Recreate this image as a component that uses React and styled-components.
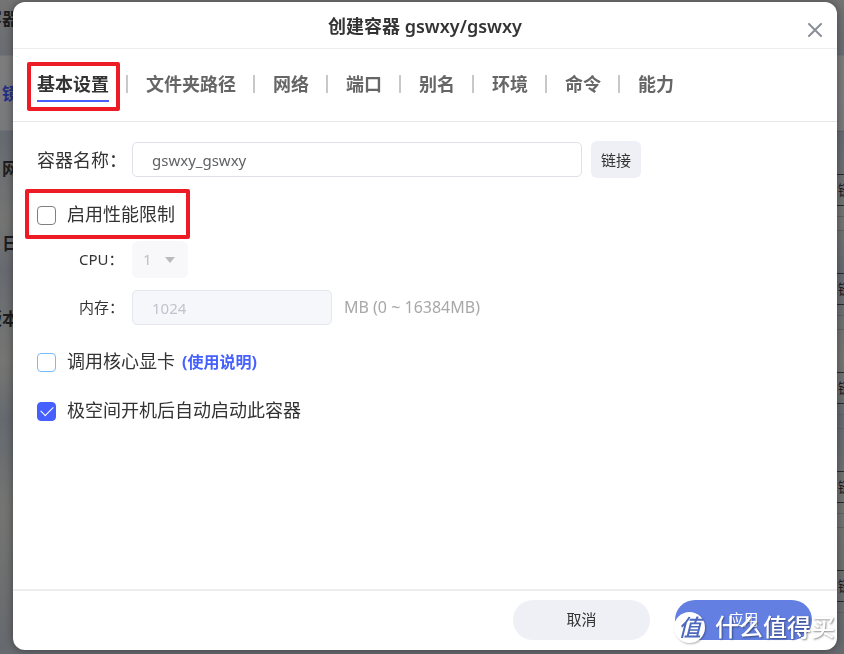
import React, { useState } from "react";
import styled, { createGlobalStyle } from "styled-components";

const tabs = [
  "基本设置",
  "文件夹路径",
  "网络",
  "端口",
  "别名",
  "环境",
  "命令",
  "能力",
];

const sideItems = [
  { text: "容器" },
  { text: "镜", active: true },
  { text: "网" },
  { text: "日" },
  { text: "版本" },
];

const App = () => {
  const [activeTab, setActiveTab] = useState(tabs[0]);
  const [name, setName] = useState("gswxy_gswxy");
  const [limit, setLimit] = useState(false);
  const [gpu, setGpu] = useState(false);
  const [autoStart, setAutoStart] = useState(true);

  return (
    <>
      <GlobalStyle />
      <Desktop aria-hidden="true">
        <SideNav>
          {sideItems.map((item) => (
            <SideItem key={item.text} $active={item.active}>
              {item.text}
            </SideItem>
          ))}
        </SideNav>
        <CardList>
          {[1, 2, 3, 4, 5].map((n) => (
            <Card key={n}>
              <CardAction>链</CardAction>
            </Card>
          ))}
        </CardList>
      </Desktop>

      <Overlay>
        <Modal role="dialog" aria-labelledby="dialog-title">
          <Header>
            <Title id="dialog-title">创建容器 gswxy/gswxy</Title>
            <CloseButton type="button" aria-label="关闭">
              <svg width="14" height="14" viewBox="0 0 14 14">
                <path
                  d="M1 1L13 13M13 1L1 13"
                  stroke="#8b8e99"
                  strokeWidth="2"
                  strokeLinecap="round"
                />
              </svg>
            </CloseButton>
          </Header>

          <TabBar>
            {tabs.map((tab) => (
              <TabItem key={tab} $marked={tab === tabs[0]}>
                <Tab
                  type="button"
                  $active={tab === activeTab}
                  onClick={() => setActiveTab(tab)}
                >
                  {tab}
                </Tab>
              </TabItem>
            ))}
          </TabBar>

          <Body>
            <Row>
              <NameLabel htmlFor="name">容器名称：</NameLabel>
              <TextInput
                id="name"
                $width="450px"
                value={name}
                onChange={(e) => setName(e.target.value)}
              />
              <LinkButton type="button">链接</LinkButton>
            </Row>

            <Row $top="19px">
              <CheckLabel $marked>
                <Checkbox
                  type="checkbox"
                  checked={limit}
                  onChange={(e) => setLimit(e.target.checked)}
                />
                <CheckText>启用性能限制</CheckText>
              </CheckLabel>
            </Row>

            <Row $top="7px" $indent>
              <SubLabel htmlFor="cpu">CPU：</SubLabel>
              <SelectBox>
                <Select id="cpu" disabled={!limit} defaultValue="1">
                  <option>1</option>
                  <option>2</option>
                  <option>4</option>
                </Select>
                <Caret width="10" height="6" viewBox="0 0 10 6">
                  <path d="M0 0H10L5 6Z" fill="#b9bbc0" />
                </Caret>
              </SelectBox>
            </Row>

            <Row $top="11px" $indent>
              <SubLabel htmlFor="memory">内存：</SubLabel>
              <TextInput
                id="memory"
                $width="200px"
                defaultValue="1024"
                disabled={!limit}
              />
              <Unit>MB (0 ~ 16384MB)</Unit>
            </Row>

            <Row $top="18px">
              <CheckLabel>
                <Checkbox
                  type="checkbox"
                  $border="#79bbff"
                  checked={gpu}
                  onChange={(e) => setGpu(e.target.checked)}
                />
                <CheckText>调用核心显卡</CheckText>
              </CheckLabel>
              <HelpLink href="#help">(使用说明)</HelpLink>
            </Row>

            <Row $top="12px">
              <CheckLabel>
                <Checkbox
                  type="checkbox"
                  checked={autoStart}
                  onChange={(e) => setAutoStart(e.target.checked)}
                />
                <CheckText>极空间开机后自动启动此容器</CheckText>
              </CheckLabel>
            </Row>
          </Body>

          <Footer>
            <FooterButton type="button">取消</FooterButton>
            <FooterButton type="button" $primary>
              应用
            </FooterButton>
            <Watermark>
              <Badge>值</Badge>
              什么值得买
            </Watermark>
          </Footer>
        </Modal>
      </Overlay>
    </>
  );
};

export default App;

const GlobalStyle = createGlobalStyle`
  * {
    box-sizing: border-box;
  }

  body {
    margin: 0;
    font-family: "Noto Sans", "Noto Sans CJK SC", sans-serif;
    color: #333;
  }

  button,
  input,
  select {
    font-family: inherit;
  }
`;

const Desktop = styled.div`
  display: flex;
  justify-content: space-between;
  height: 100vh;
  overflow: hidden;
  background: linear-gradient(
    #747474 0,
    #696c71 55px,
    #7d7d7e 56px,
    #78797b 130px,
    #666a71 131px,
    #747573 220px,
    #676a70 270px,
    #767673 360px,
    #666a70 420px,
    #747572 510px,
    #66696e 100%
  );
`;

const SideNav = styled.div`
  display: flex;
  flex-direction: column;
  gap: 37px;
  width: 19px;
`;

const SideItem = styled.div`
  display: flex;
  flex-shrink: 0;
  align-items: center;
  justify-content: flex-end;
  height: 38px;
  padding-bottom: 3px;
  font-size: 17px;
  font-weight: 700;
  white-space: nowrap;
  color: ${(props) => (props.$active ? "#252f86" : "#1d1d1f")};
`;

const CardList = styled.div`
  display: flex;
  flex-direction: column;
  gap: 13px;
  width: 20px;
  padding-top: 131px;
`;

const Card = styled.div`
  flex-shrink: 0;
  height: 86px;
  padding-top: 42px;
  border-top: 1px solid #606266;
  border-bottom: 1px solid #606266;
`;

const CardAction = styled.div`
  height: 32px;
  padding-left: 14px;
  overflow: hidden;
  border-top: 1px solid #2a2b2d;
  border-bottom: 1px solid #2a2b2d;
  font-size: 14px;
  line-height: 30px;
  color: #1d1d1f;
`;

const Overlay = styled.div`
  position: fixed;
  inset: 0;
  display: flex;
  padding: 2px 7px 4px 13px;
`;

const Modal = styled.div`
  display: flex;
  flex: 1;
  flex-direction: column;
  min-width: 0;
  border-radius: 12px;
  background: #fff;
  box-shadow: 0 0 8px rgba(0, 0, 0, 0.4);
`;

const Header = styled.div`
  display: grid;
  grid-template-columns: 1fr auto 1fr;
  align-items: center;
  height: 47px;
  padding: 2px 14px 0;
  border-bottom: 1px solid #ededef;
`;

const Title = styled.h1`
  grid-column: 2;
  margin: 0;
  font-size: 18px;
  font-weight: 600;
  line-height: 26px;
  color: #333;
`;

const CloseButton = styled.button`
  display: flex;
  justify-self: end;
  margin-top: 7px;
  padding: 1px;
  border: 0;
  background: none;
  cursor: pointer;
`;

const TabBar = styled.div`
  display: flex;
  height: 73px;
  padding: 19px 24px 0;
  border-bottom: 1px solid #e6e6e9;
`;

const TabItem = styled.div`
  position: relative;
  display: flex;
  height: 34px;

  &:not(:first-child)::before {
    content: "";
    width: 2px;
    height: 18px;
    margin: 7px 18px 0 17px;
    background: #c8c8c8;
  }

  &::after {
    content: "";
    display: ${(props) => (props.$marked ? "block" : "none")};
    position: absolute;
    inset: -6px -11px -9px -10px;
    border: 4px solid #ed1c24;
    border-radius: 2px;
    pointer-events: none;
  }
`;

const Tab = styled.button`
  padding: 0;
  border: 0;
  border-bottom: 2px solid ${(props) => (props.$active ? "#4560ff" : "transparent")};
  background: none;
  font-size: 18px;
  font-weight: 700;
  line-height: 32px;
  white-space: nowrap;
  color: ${(props) => (props.$active ? "#333" : "#666")};
  cursor: pointer;
`;

const Body = styled.div`
  flex: 1;
  padding: 19px 24px;
`;

const Row = styled.div`
  display: flex;
  align-items: center;
  height: 37px;
  margin-top: ${(props) => props.$top || "0"};
  padding-left: ${(props) => (props.$indent ? "42px" : "0")};
`;

const NameLabel = styled.label`
  flex-shrink: 0;
  width: 95px;
  padding-bottom: 2px;
  font-size: 18px;
`;

const SubLabel = styled.label`
  flex-shrink: 0;
  width: 53px;
  padding-bottom: 2px;
  font-size: 15px;
`;

const TextInput = styled.input`
  flex: 0 1 ${(props) => props.$width};
  min-width: 0;
  height: 35px;
  padding: 0 19px;
  border: 1px solid #dfe0ea;
  border-radius: 5px;
  background: #fff;
  font-size: 15px;
  color: #606266;
  outline: none;

  &:disabled {
    border-color: #e4e7ed;
    background: #f5f7fa;
    color: #c0c4cc;
  }
`;

const LinkButton = styled.button`
  flex-shrink: 0;
  height: 37px;
  margin-left: 9px;
  padding: 0 10px;
  border: 0;
  border-radius: 6px;
  background: #eff0f5;
  font-size: 15px;
  color: #333;
  cursor: pointer;
`;

const CheckLabel = styled.label`
  position: relative;
  display: flex;
  align-items: center;
  gap: 11px;
  white-space: nowrap;
  cursor: pointer;

  &::after {
    content: "";
    display: ${(props) => (props.$marked ? "block" : "none")};
    position: absolute;
    inset: -13px -15px -9px -12px;
    border: 4px solid #ed1c24;
    border-radius: 2px;
    pointer-events: none;
  }
`;

const CheckText = styled.span`
  padding-bottom: 4px;
  font-size: 18px;
  line-height: 24px;
`;

const Checkbox = styled.input`
  appearance: none;
  display: grid;
  place-items: center;
  width: 19px;
  height: 19px;
  margin: 0;
  border: 1px solid ${(props) => props.$border || "#7f7f7f"};
  border-radius: 4px;
  background: #fff;

  &:checked {
    border-color: #4560ff;
    background: #4560ff;
  }

  &:checked::before {
    content: "";
    width: 11px;
    height: 6px;
    margin-bottom: 4px;
    border: solid #fff;
    border-width: 0 0 1px 1px;
    transform: rotate(-45deg);
  }
`;

const SelectBox = styled.div`
  display: grid;
  align-items: center;
  width: 56px;
  height: 37px;
  border-radius: 6px;
  background: #f8f8fa;
`;

const Select = styled.select`
  grid-area: 1 / 1;
  appearance: none;
  height: 37px;
  padding: 0 11px 2px;
  border: 0;
  background: transparent;
  font-size: 15px;
  color: #333;

  &:disabled {
    color: #c0c0c4;
    opacity: 1;
  }
`;

const Caret = styled.svg`
  grid-area: 1 / 1;
  justify-self: end;
  margin-right: 13px;
  pointer-events: none;
`;

const Unit = styled.span`
  margin-left: 12px;
  padding-bottom: 2px;
  font-size: 16px;
  color: #a8a8a8;
`;

const HelpLink = styled.a`
  margin-left: 7px;
  padding-bottom: 4px;
  font-size: 16px;
  font-weight: 700;
  color: #4560ff;
  text-decoration: none;
`;

const Footer = styled.div`
  position: relative;
  display: flex;
  justify-content: flex-end;
  gap: 25px;
  padding: 9px 25px 10px;
  border-top: 2px solid #ededef;
`;

const FooterButton = styled.button`
  width: 137px;
  height: 40px;
  padding: 0 0 4px;
  border: 0;
  border-radius: 20px;
  background: ${(props) => (props.$primary ? "#637fe2" : "#eff0f5")};
  font-size: 15px;
  color: ${(props) => (props.$primary ? "#fff" : "#333")};
  cursor: pointer;
`;

const Watermark = styled.div`
  position: absolute;
  right: 2px;
  bottom: 6px;
  display: flex;
  align-items: center;
  gap: 10px;
  font-size: 24px;
  font-weight: 500;
  line-height: 34px;
  white-space: nowrap;
  color: #fff;
  text-shadow: 1px 1px 2px rgba(0, 0, 0, 0.45);
  pointer-events: none;
`;

const Badge = styled.span`
  display: grid;
  place-items: center;
  width: 31px;
  height: 31px;
  border-radius: 50%;
  background: #fff;
  box-shadow: 1px 1px 2px rgba(0, 0, 0, 0.3);
  font-size: 23px;
  font-style: italic;
  font-weight: 500;
  line-height: 28px;
  color: #4d69bd;
  text-shadow: none;
`;
